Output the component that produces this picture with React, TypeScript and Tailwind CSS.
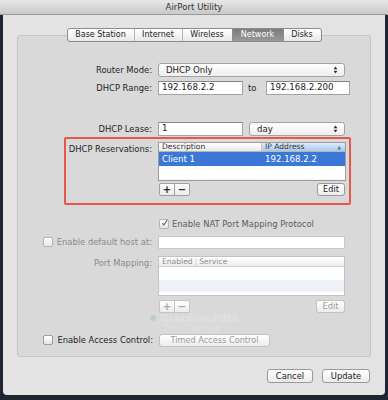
import React from "react";

function UpDown() {
  return (
    <svg width="5" height="8" viewBox="0 0 5 8">
      <path d="M2.5 0.6 L4.4 3.2 H0.6Z M2.5 7.4 L4.4 4.8 H0.6Z" fill="#2a2a2a" />
    </svg>
  );
}

function Popup({ text, w }: { text: string; w: string }) {
  return (
    <div
      className={`${w} h-[14px] flex items-center justify-between pl-[7px] pr-[6px] bg-linear-to-b from-white to-[#eeeeee] border border-[#a3a3a3] rounded-[3px] text-[8.6px] text-[#1a1a1a]`}
    >
      <span>{text}</span>
      <UpDown />
    </div>
  );
}

function Field({ text, w }: { text?: string; w: string }) {
  return (
    <div
      className={`${w} h-[14px] flex items-center pl-[3px] bg-white border border-[#a3a3a3] border-t-[#858585] text-[8.7px] text-[#1a1a1a]`}
    >
      {text}
    </div>
  );
}

function Btn({ text, w, disabled }: { text: string; w: string; disabled?: boolean }) {
  return (
    <div
      className={`${w} h-[13px] flex items-center justify-center rounded-[3px] border bg-linear-to-b from-white to-[#ececec] text-[8.2px] ${
        disabled ? "border-[#c2c2c2] text-[#9a9a9a]" : "border-[#9a9a9a] text-[#1a1a1a]"
      }`}
    >
      {text}
    </div>
  );
}

function PlusMinus({ disabled }: { disabled?: boolean }) {
  const c = disabled ? "text-[#a8a8a8] border-[#c4c4c4]" : "text-[#2a2a2a] border-[#a0a0a0]";
  return (
    <div className={`flex h-[13px] border rounded-[2px] bg-linear-to-b from-white to-[#ececec] ${c}`}>
      <div className={`w-[15px] flex items-center justify-center border-r text-[10px] font-bold leading-none ${c}`}>+</div>
      <div className="w-[14px] flex items-center justify-center text-[10px] font-bold leading-none">−</div>
    </div>
  );
}

function Check({ checked, disabled }: { checked?: boolean; disabled?: boolean }) {
  return (
    <div
      className={`w-[10px] h-[10px] shrink-0 rounded-[2px] border bg-linear-to-b from-white to-[#e6e6e6] flex items-center justify-center ${
        disabled ? "border-[#b4b4b4]" : "border-[#999999]"
      }`}
    >
      {checked && (
        <svg width="10" height="10" viewBox="0 0 10 10" className="-mt-[2px] ml-[1px]">
          <path d="M2 5 L4 8 L9 0.5" stroke="#6a6a6a" strokeWidth="1.5" fill="none" />
        </svg>
      )}
    </div>
  );
}

export default function App() {
  return (
    <div className="relative w-[388px] h-[400px] bg-[#1f2631] overflow-hidden font-['DejaVu_Sans',sans-serif]">
      {/* title bar */}
      <div className="h-[15px] bg-linear-to-b from-[#e8e8e8] to-[#c9c9c9] border-b border-[#9a9a9a] flex items-center justify-center text-[8.6px] text-[#333333]">
        AirPort Utility
      </div>

      {/* window body */}
      <div className="mx-[3px] h-[380px] bg-[#e3e3e3] rounded-b-[4px] flex flex-col">
        <div className="mt-[20px] ml-[14px] w-[354px] h-[322px] border border-[#c4c4c4] bg-[#d9d9d9] rounded-[3px] flex flex-col">
          {/* tabs */}
          <div className="-mt-[8px] self-center flex h-[14px] rounded-[3px] border border-[#8c8c8c] bg-linear-to-b from-white to-[#e8e8e8] overflow-hidden text-[8px] text-[#222222]">
            <div className="w-[67px] flex items-center justify-center border-r border-[#b4b4b4]">Base Station</div>
            <div className="w-[48px] flex items-center justify-center border-r border-[#b4b4b4]">Internet</div>
            <div className="w-[50px] flex items-center justify-center border-r border-[#8c8c8c]">Wireless</div>
            <div className="w-[51px] flex items-center justify-center border-r border-[#8c8c8c] bg-linear-to-b from-[#7c7c7c] to-[#989898] text-white">
              Network
            </div>
            <div className="w-[37px] flex items-center justify-center">Disks</div>
          </div>

          {/* Router Mode */}
          <div className="mt-[21px] flex items-center gap-[6px] h-[14px]">
            <div className="w-[134px] text-right text-[8.4px] text-[#1e1e1e]">Router Mode:</div>
            <Popup text="DHCP Only" w="w-[187px]" />
          </div>

          {/* DHCP Range */}
          <div className="mt-[4px] flex items-center gap-[6px] h-[14px]">
            <div className="w-[134px] text-right text-[8.4px] text-[#1e1e1e]">DHCP Range:</div>
            <Field text="192.168.2.2" w="w-[85px]" />
            <div className="ml-[-1px] w-[12px] text-[8.4px] text-[#1e1e1e]">to</div>
            <Field text="192.168.2.200" w="w-[84px]" />
          </div>

          {/* DHCP Lease */}
          <div className="mt-[27px] flex items-center gap-[6px] h-[14px]">
            <div className="w-[134px] text-right text-[8.4px] text-[#1e1e1e]">DHCP Lease:</div>
            <Field text="1" w="w-[85px]" />
            <Popup text="day" w="w-[96px]" />
          </div>

          {/* DHCP Reservations */}
          <div className="mt-[6px] flex items-start gap-[6px]">
            <div className="w-[134px] pt-[1px] text-right text-[8.4px] text-[#1e1e1e]">DHCP Reservations:</div>
            <div className="w-[188px] h-[39px] border border-[#9c9c9c] bg-white flex flex-col">
              <div className="h-[9px] flex border-b border-[#b6b6b6] text-[7.6px] leading-none text-[#333333]">
                <div className="w-[103px] pl-[3px] flex items-center bg-linear-to-b from-white to-[#e9e9e9] border-r border-[#c8c8c8]">
                  Description
                </div>
                <div className="flex-1 pl-[3px] pr-[4px] flex items-center justify-between bg-linear-to-b from-[#dcebfa] to-[#a9c9ee]">
                  <span>IP Address</span>
                  <span className="text-[5px] text-[#5a7fa8]">▲</span>
                </div>
              </div>
              <div className="h-[14px] flex items-center bg-[#3a77d6] text-white text-[8.6px]">
                <div className="w-[103px] pl-[3px]">Client 1</div>
                <div className="pl-[3px]">192.168.2.2</div>
              </div>
              <div className="h-[13px] bg-white" />
              <div className="flex-1 bg-[#f2f6fb]" />
            </div>
          </div>

          {/* +/- Edit */}
          <div className="mt-[2px] ml-[141px] w-[186px] flex items-center justify-between">
            <PlusMinus />
            <Btn text="Edit" w="w-[28px]" />
          </div>

          {/* NAT */}
          <div className="mt-[22px] ml-[141px] h-[12px] flex items-center gap-[3px]">
            <Check checked disabled />
            <span className="text-[8.4px] text-[#5c5c5c]">Enable NAT Port Mapping Protocol</span>
          </div>

          {/* default host */}
          <div className="mt-[6px] flex items-center gap-[6px] h-[13px]">
            <div className="w-[134px] flex items-center justify-end gap-[4px] text-[8.4px] text-[#8a8a8a]">
              <Check disabled />
              <span>Enable default host at:</span>
            </div>
            <div className="w-[187px] h-[13px] bg-white border border-[#c8c8c8]" />
          </div>

          {/* Port Mapping */}
          <div className="mt-[7px] flex items-start gap-[6px]">
            <div className="w-[134px] pt-[1px] text-right text-[8.4px] text-[#8a8a8a]">Port Mapping:</div>
            <div className="w-[187px] h-[40px] border border-[#c2c2c2] bg-white flex flex-col">
              <div className="h-[10px] flex items-center border-b border-[#cfcfcf] bg-linear-to-b from-white to-[#ededed] text-[7.6px] leading-none text-[#8a8a8a] pl-[3px]">
                Enabled <span className="mx-[2px] text-[#c4c4c4]">|</span> Service
              </div>
              <div className="h-[13px] bg-white" />
              <div className="h-[12px] bg-[#eef2f8]" />
              <div className="flex-1 bg-white" />
            </div>
          </div>

          {/* +/- Edit disabled */}
          <div className="mt-[4px] ml-[141px] w-[186px] flex items-center justify-between">
            <PlusMinus disabled />
            <Btn text="Edit" w="w-[29px]" disabled />
          </div>

          {/* Access Control */}
          <div className="mt-[21px] flex items-center gap-[6px] h-[13px]">
            <div className="w-[135px] flex items-center justify-end gap-[4px] text-[8.4px] text-[#1e1e1e]">
              <Check />
              <span>Enable Access Control:</span>
            </div>
            <Btn text="Timed Access Control" w="w-[111px]" disabled />
          </div>
        </div>

        {/* bottom buttons */}
        <div className="mt-[12px] mr-[15px] self-end flex gap-[9px]">
          <div className="w-[46px] h-[14px] flex items-center justify-center rounded-[3px] border border-[#999999] bg-linear-to-b from-white to-[#ebebeb] text-[8.4px] text-[#1a1a1a]">
            Cancel
          </div>
          <div className="w-[48px] h-[14px] flex items-center justify-center rounded-[3px] border border-[#999999] bg-linear-to-b from-white to-[#ebebeb] text-[8.4px] text-[#1a1a1a]">
            Update
          </div>
        </div>
      </div>

      {/* ghost text from a window behind */}
      <div className="absolute left-[150px] top-[313px] flex items-center gap-[4px] text-[10.5px] leading-none font-bold text-white opacity-20">
        <span className="w-[6px] h-[6px] rounded-full bg-[#4caf50]" />
        <span>GraphisoftNA</span>
      </div>
      <div className="absolute left-[163px] top-[324px] text-[8.5px] leading-none text-white opacity-20">Time Capsule</div>

      {/* red annotation */}
      <div className="absolute left-[64px] top-[137px] w-[287px] h-[68px] border-2 border-[#e8574b] rounded-[2px]" />
    </div>
  );
}
